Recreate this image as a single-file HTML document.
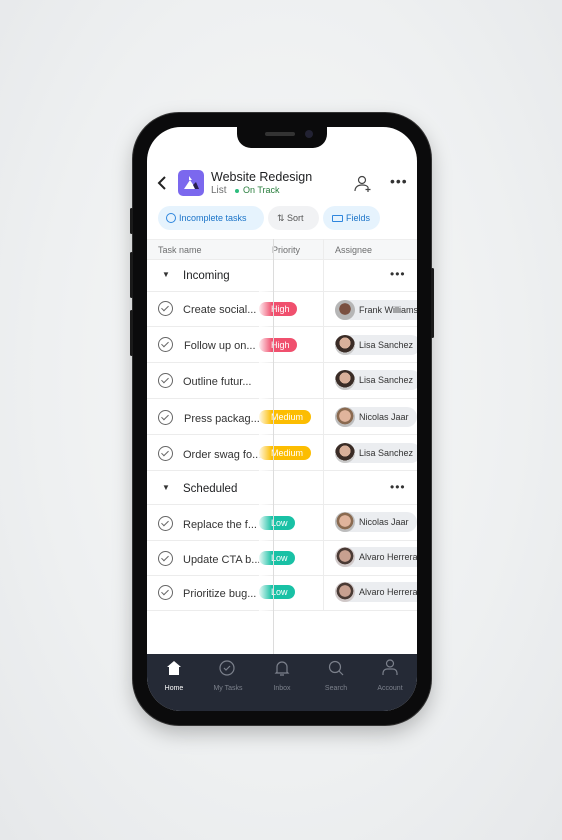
<!DOCTYPE html><html><head><style>
*{margin:0;padding:0;box-sizing:border-box}
body{width:562px;height:840px;overflow:hidden;background:radial-gradient(ellipse at 50% 45%,#f7f8f8 0%,#eef0f1 60%,#e6e8ea 100%);font-family:"Liberation Sans",sans-serif;position:relative}
.phone{position:absolute;left:133px;top:113px;width:298px;height:612px;background:#0b0b0c;border-radius:46px;box-shadow:0 0 0 1px #333,0 8px 20px rgba(0,0,0,.25)}
.btn{position:absolute;background:#1a1a1a;width:3px;border-radius:2px}
.screen{position:absolute;left:147px;top:127px;width:270px;height:584px;background:#fff;border-radius:34px;overflow:hidden}
.notch{position:absolute;left:90px;top:0;width:90px;height:21px;background:#0b0b0c;border-radius:0 0 14px 14px}
.abs{position:absolute}
.t{position:absolute;font-size:11px;color:#333;white-space:nowrap}
.row{position:absolute;left:0;width:270px;border-bottom:1px solid #ececec}
.chk{position:absolute;left:11px;width:15px;height:15px;border:1.3px solid #666;border-radius:50%}
.chk:after{content:"";position:absolute;left:4px;top:2px;width:3px;height:6px;border:solid #666;border-width:0 1.3px 1.3px 0;transform:rotate(45deg)}
.pill{position:absolute;left:112px;height:14px;border-radius:7px;color:#fff;font-size:9px;line-height:14px;padding-left:12px;white-space:nowrap}
.as{position:absolute;left:188px;height:20px;border-radius:10px;background:#ebedf0;font-size:9px;line-height:20px;padding-left:24px;padding-right:8px;color:#333;white-space:nowrap}
.as i{position:absolute;left:0;top:0;width:20px;height:20px;border-radius:50%;background:radial-gradient(circle at 50% 40%,#d9b09a 0 35%,#3a2c26 36% 60%,#c9c9c9 61%)}
.nav{position:absolute;left:0;top:527px;width:270px;height:57px;background:#252a36}
.nl{position:absolute;top:31px;font-size:7px;color:#7c818c;width:54px;text-align:center}
</style></head><body>
<div class="phone"></div>
<div class="btn" style="left:130px;top:208px;height:26px"></div>
<div class="btn" style="left:130px;top:252px;height:46px"></div>
<div class="btn" style="left:130px;top:310px;height:46px"></div>
<div class="btn" style="left:431px;top:268px;height:70px"></div>
<div class="screen">
<div class="notch"><div class="abs" style="left:28px;top:5px;width:30px;height:4px;border-radius:2px;background:#333"></div><div class="abs" style="left:68px;top:3px;width:8px;height:8px;border-radius:50%;background:#223"></div></div>
<svg class="abs" style="left:10px;top:48px" width="10" height="16"><path d="M8 2L2 8l6 6" stroke="#222" stroke-width="2" fill="none"/></svg>
<div class="abs" style="left:31px;top:43px;width:26px;height:26px;border-radius:5px;background:#7b68ee"></div>
<svg class="abs" style="left:31px;top:43px" width="26" height="26"><path d="M6 19L12 10 18 19Z" fill="#fff"/><path d="M15 15l3-3 3 7h-4z" fill="#2a2050"/><path d="M11 6v4h3z" fill="#fff"/></svg>
<div class="t" style="left:64px;top:43px;font-size:12.5px;color:#1e1f21">Website Redesign</div>
<div class="t" style="left:64px;top:58px;font-size:10px;color:#6d6e6f">List</div>
<div class="abs" style="left:88px;top:62px;width:4px;height:4px;border-radius:50%;background:#2dbd7e"></div>
<div class="t" style="left:96px;top:58px;font-size:9px;color:#287d3c">On Track</div>
<svg class="abs" style="left:207px;top:48px" width="18" height="18"><circle cx="8" cy="5" r="3.5" stroke="#444" stroke-width="1.2" fill="none"/><path d="M1 16c0-4 3-6 7-6s5 1 6 2M14 12v5M11.5 14.5h5" stroke="#444" stroke-width="1.2" fill="none"/></svg>
<div class="t" style="left:243px;top:46px;font-size:14px;color:#333;letter-spacing:1px">•••</div>
<div class="abs" style="left:11px;top:79px;width:106px;height:24px;border-radius:12px;background:#e6f3fd"></div>
<div class="abs" style="left:19px;top:86px;width:10px;height:10px;border:1px solid #2e86de;border-radius:50%"></div>
<div class="t" style="left:32px;top:86px;font-size:9px;color:#1a73c8">Incomplete tasks</div>
<div class="abs" style="left:121px;top:79px;width:51px;height:24px;border-radius:12px;background:#f1f2f4"></div>
<div class="t" style="left:130px;top:86px;font-size:9px;color:#555">⇅ Sort</div>
<div class="abs" style="left:176px;top:79px;width:57px;height:24px;border-radius:12px;background:#e6f3fd"></div>
<div class="abs" style="left:185px;top:88px;width:11px;height:7px;border:1px solid #2e86de;border-radius:1px"></div>
<div class="t" style="left:199px;top:86px;font-size:9px;color:#1a73c8">Fields</div>
<div class="abs" style="left:0;top:112px;width:270px;height:21px;background:#f6f7f8;border-bottom:1px solid #ececec;border-top:1px solid #eee"></div>
<div class="t" style="left:11px;top:118px;font-size:9px;color:#6d6e6f">Task name</div>
<div class="t" style="left:125px;top:118px;font-size:9px;color:#6d6e6f">Priority</div>
<div class="t" style="left:188px;top:118px;font-size:9px;color:#6d6e6f">Assignee</div>
<div class="abs" style="left:176px;top:112px;width:1px;height:372px;background:#ececec"></div>
<div class="row" style="top:133px;height:32px"></div>
<div class="t" style="left:15px;top:143px;font-size:8px">▼</div>
<div class="t" style="left:36px;top:143px;font-size:11.5px;color:#1e1f21">Incoming</div>
<div class="t" style="left:243px;top:140px;font-size:12px;letter-spacing:1px">•••</div>
<div class="row" style="top:165px;height:35px"></div><div class="chk" style="top:174px"></div><div class="t" style="left:36px;top:177px">Create social...</div><div class="pill" style="top:175px;background:#f0506e;width:38px">High</div><div class="as" style="top:173px">Frank Williams<i style="background:radial-gradient(circle at 50% 45%,#7a5040 0 38%,#b6b6b6 40%)"></i></div>
<div class="row" style="top:200px;height:36px"></div><div class="chk" style="top:210px"></div><div class="t" style="left:37px;top:213px">Follow up on...</div><div class="pill" style="top:211px;background:#f0506e;width:38px">High</div><div class="as" style="top:208px">Lisa Sanchez<i></i></div>
<div class="row" style="top:236px;height:36px"></div><div class="chk" style="top:246px"></div><div class="t" style="left:36px;top:249px">Outline futur...</div><div class="as" style="top:243px">Lisa Sanchez<i></i></div>
<div class="row" style="top:272px;height:36px"></div><div class="chk" style="top:283px"></div><div class="t" style="left:37px;top:286px">Press packag...</div><div class="pill" style="top:283px;background:#fcbd01;width:52px">Medium</div><div class="as" style="top:280px">Nicolas Jaar<i style="background:radial-gradient(circle at 50% 45%,#e0b49c 0 38%,#8a6a50 40% 55%,#bdbdbd 57%)"></i></div>
<div class="row" style="top:308px;height:36px"></div><div class="chk" style="top:319px"></div><div class="t" style="left:36px;top:322px">Order swag fo...</div><div class="pill" style="top:319px;background:#fcbd01;width:52px">Medium</div><div class="as" style="top:316px">Lisa Sanchez<i></i></div>
<div class="row" style="top:344px;height:34px"></div>
<div class="t" style="left:15px;top:356px;font-size:8px">▼</div>
<div class="t" style="left:36px;top:356px;font-size:11.5px;color:#1e1f21">Scheduled</div>
<div class="t" style="left:243px;top:353px;font-size:12px;letter-spacing:1px">•••</div>
<div class="row" style="top:378px;height:36px"></div><div class="chk" style="top:389px"></div><div class="t" style="left:36px;top:392px">Replace the f...</div><div class="pill" style="top:389px;background:#19c1a5;width:36px">Low</div><div class="as" style="top:385px">Nicolas Jaar<i style="background:radial-gradient(circle at 50% 45%,#e0b49c 0 38%,#8a6a50 40% 55%,#bdbdbd 57%)"></i></div>
<div class="row" style="top:414px;height:35px"></div><div class="chk" style="top:424px"></div><div class="t" style="left:36px;top:427px">Update CTA b...</div><div class="pill" style="top:424px;background:#19c1a5;width:36px">Low</div><div class="as" style="top:420px">Alvaro Herrera<i style="background:radial-gradient(circle at 50% 45%,#c8a090 0 38%,#4a3a34 40% 55%,#d0c8c8 57%)"></i></div>
<div class="row" style="top:449px;height:35px"></div><div class="chk" style="top:458px"></div><div class="t" style="left:36px;top:461px">Prioritize bug...</div><div class="pill" style="top:458px;background:#19c1a5;width:36px">Low</div><div class="as" style="top:455px">Alvaro Herrera<i style="background:radial-gradient(circle at 50% 45%,#c8a090 0 38%,#4a3a34 40% 55%,#d0c8c8 57%)"></i></div>
<div class="abs" style="left:112px;top:133px;width:13px;height:351px;background:linear-gradient(90deg,rgba(255,255,255,.9),rgba(255,255,255,0))"></div>
<div class="abs" style="left:126px;top:112px;width:1px;height:415px;background:#dcdcdc"></div>
<div class="nav">
<svg class="abs" style="left:19px;top:6px" width="16" height="16"><path d="M8 1L1 7h2v8h10V7h2z" fill="#fff"/></svg>
<div class="nl" style="left:0;color:#fff">Home</div>
<svg class="abs" style="left:72px;top:6px" width="16" height="16"><circle cx="8" cy="8" r="7" stroke="#7c818c" fill="none" stroke-width="1.2"/><path d="M5 8l2 2 4-4" stroke="#7c818c" fill="none" stroke-width="1.2"/></svg>
<div class="nl" style="left:54px">My Tasks</div>
<svg class="abs" style="left:127px;top:6px" width="16" height="17"><path d="M3 12V7a5 5 0 0110 0v5l1 1H2zM6 15h4" stroke="#7c818c" fill="none" stroke-width="1.2"/></svg>
<div class="nl" style="left:108px">Inbox</div>
<svg class="abs" style="left:181px;top:6px" width="16" height="16"><circle cx="7" cy="7" r="5.5" stroke="#7c818c" fill="none" stroke-width="1.2"/><path d="M11 11l4 4" stroke="#7c818c" stroke-width="1.2"/></svg>
<div class="nl" style="left:162px">Search</div>
<svg class="abs" style="left:235px;top:5px" width="16" height="17"><circle cx="8" cy="4.5" r="3.5" stroke="#7c818c" fill="none" stroke-width="1.2"/><path d="M1 16v-2a4 4 0 014-4h6a4 4 0 014 4v2" stroke="#7c818c" fill="none" stroke-width="1.2"/></svg>
<div class="nl" style="left:216px">Account</div>
</div>
</div>
</body></html>
